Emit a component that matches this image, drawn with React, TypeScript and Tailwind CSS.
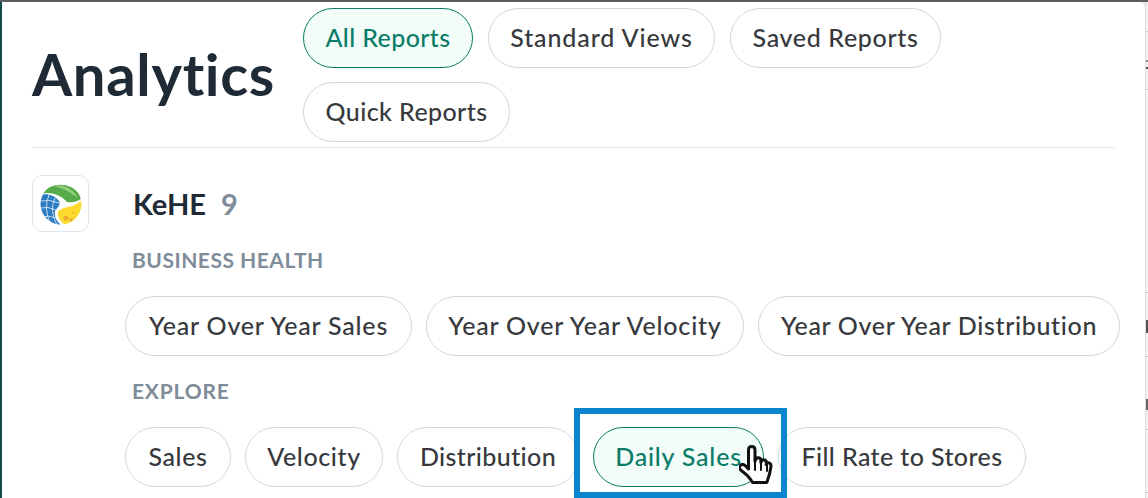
import React from 'react';

const FONT = "font-['Lato','Noto_Sans',sans-serif]";

const Pill = ({ label, active = false, className = '', children }: { label: string; active?: boolean; className?: string; children?: React.ReactNode }) => (
  <div
    className={`relative flex h-[60px] shrink-0 items-center justify-center rounded-full border text-[25px] font-medium ${className} ${
      active ? 'border-[#0a7c68] bg-[#f2fdfa] text-[#0a7c68]' : 'border-[#d0d7e2] bg-white text-[#37393d]'
    }`}
  >
    {label}
    {children}
  </div>
);

const HandCursor = () => (
  <svg className="absolute left-[145px] top-[16px] h-[46px] w-[38px]" viewBox="0 0 38 44">
    <path
      d="M9.500 5c0-2.300 1.200-3.500 3.200-3.500S16 2.700 16 5v11.500l.6-1.500c.5-1.700 1.500-2.500 3-2.300 1.600.2 2.400 1.400 2.300 3.200l-.1 1.600.7-1.200c.6-1.200 1.700-1.700 3-1.300 1.500.5 2 1.700 1.800 3.200l-.2 1.200.6-.7c.8-1 1.900-1.200 2.900-.6 1.300.7 1.600 2 1.300 3.600-.6 3.500-1 7-2.300 10.300-.9 2.300-1.700 5.500-1.700 5.500H13.500c-1-2.300-3-4.500-5-6.800L1.700 25c-1.500-1.500-1.500-3.300-.4-4.500 1.200-1.300 3.300-1.200 5 .2L9.500 24z"
      fill="#fff"
      stroke="#111"
      strokeWidth="3"
      strokeLinejoin="round"
    />
    <path d="M16 17v8M22 18v7M28 20v6" stroke="#111" strokeWidth="2" strokeLinecap="round" fill="none" />
  </svg>
);

const KeheLogo = () => (
  <svg viewBox="0 0 42 42" className="h-[42px] w-[42px]">
    <defs>
      <clipPath id="ball">
        <circle cx="21" cy="21" r="20.500" />
      </clipPath>
    </defs>
    <g clipPath="url(#ball)">
      <rect width="42" height="42" fill="#fff" />
      <path d="M0 12 C8 10 15 13 19 18 C21 22 17 25 15 28 C14 33 16 38 22 43 L0 42z" fill="#2d7cc2" />
      <path d="M1 18 Q9 16 19 20 M0 25 Q8 23 16 27 M1 34 Q9 32 16 35 M9 12 Q3 25 11 42 M15 15 Q9 28 17 42" stroke="#d5e8f7" strokeWidth="0.900" fill="none" />
      <path d="M2 11 C8 0 32 -4 42 15 C38 19 31 20 27 19 C22 13 11 8 2 11z" fill="#58ab4a" />
      <path d="M14 3 C24 1 34 7 38 15 C30 9 23 5 14 3z" fill="#93cf7f" />
      <path d="M42 17 L42 42 L25 42 C20 38 17 33 18 29 C20 26 24 25 28 24 C34 23 39 20 42 17z" fill="#fbd92f" />
      <circle cx="26" cy="35" r="2.400" fill="#eda92c" />
      <circle cx="31" cy="37" r="1.800" fill="#eda92c" />
      <circle cx="33" cy="30" r="1.100" fill="#eda92c" />
    </g>
  </svg>
);

const TICKS = [
  'top-[29px] h-px bg-[#c9c9c9]',
  'top-[58px] h-[2px] bg-[#8a8a8a]',
  'top-[65px] h-[2px] bg-[#555]',
  'top-[87px] h-px bg-[#c9c9c9]',
  'top-[290px] h-px bg-[#c4c4c4]',
  'top-[318px] h-[13px] bg-[#555]',
  'top-[354px] h-px bg-[#c4c4c4]',
  'top-[397px] h-[11px] bg-[#666]',
  'top-[427px] h-px bg-[#c4c4c4]',
  'top-[490px] h-px bg-[#c4c4c4]',
];

export default function App() {
  return (
    <div className={`relative h-[498px] w-[1148px] overflow-hidden bg-[#ececec] ${FONT}`}>
      <div className="h-[2px] bg-[#5b605f]" />
      <div className="flex h-[496px]">
        <div className="w-[2px] bg-[#0f4a45]" />
        <div className="w-[1143px] rounded-tr-[6px] bg-white pl-[30px] pr-[30px]">
          <div className="flex h-[146px] items-start border-b border-[#e2e6ec]">
            <h1 className="w-[271px] pt-[36px] text-[58px] leading-[72px] font-bold tracking-[0.65px] text-[#1e2a36]">Analytics</h1>
            <div className="flex w-[680px] flex-wrap gap-x-[15px] gap-y-[14px] pt-[6px]">
              <Pill label="All Reports" active className="w-[170px] tracking-[0.4px]" />
              <Pill label="Standard Views" className="w-[227px] tracking-[0.9px]" />
              <Pill label="Saved Reports" className="w-[211px] tracking-[0.65px]" />
              <Pill label="Quick Reports" className="w-[207px] tracking-[0.4px]" />
            </div>
          </div>
          <div className="flex pt-[27px]">
            <div className="flex h-[57px] w-[57px] shrink-0 items-center justify-center rounded-[10px] border border-[#dde3ec]">
              <KeheLogo />
            </div>
            <div className="ml-[36px] flex shrink-0 flex-col">
              <div className="ml-[8px] flex h-[57px] items-center gap-[15px] text-[29px] font-bold">
                <span className="text-[#1e2a36]">KeHE</span>
                <span className="text-[#7f8c9a]">9</span>
              </div>
              <div className="ml-[7px] mt-[16px] text-[21px] leading-[24px] font-bold tracking-[0.5px] text-[#7f8c9a]">BUSINESS HEALTH</div>
              <div className="mt-[24px] flex gap-[14px]">
                <Pill label="Year Over Year Sales" className="w-[287px] tracking-[0.8px]" />
                <Pill label="Year Over Year Velocity" className="w-[318px] tracking-[0.8px]" />
                <Pill label="Year Over Year Distribution" className="w-[362px] tracking-[0.65px]" />
              </div>
              <div className="ml-[7px] mt-[23px] text-[21px] leading-[24px] font-bold tracking-[0.8px] text-[#7f8c9a]">EXPLORE</div>
              <div className="mt-[24px] flex gap-[14px]">
                <Pill label="Sales" className="w-[106px] tracking-[0.6px]" />
                <Pill label="Velocity" className="w-[138px] tracking-[0.6px]" />
                <Pill label="Distribution" className="w-[182px] tracking-[0.4px]" />
                <Pill label="Daily Sales" active className="w-[171px] tracking-[0.8px]">
                  <HandCursor />
                </Pill>
                <Pill label="Fill Rate to Stores" className="w-[248px] tracking-[0.4px]" />
              </div>
            </div>
          </div>
        </div>
        <div className="relative w-[3px] border-l border-[#dcdcdc] bg-[#f1f1f1]">
          {TICKS.map((tick) => (
            <div key={tick} className={`absolute left-0 w-full ${tick}`} />
          ))}
        </div>
      </div>
      <div className="absolute left-[574px] top-[408px] h-[90px] w-[213px] border-[6px] border-[#0a84cc]" />
    </div>
  );
}
